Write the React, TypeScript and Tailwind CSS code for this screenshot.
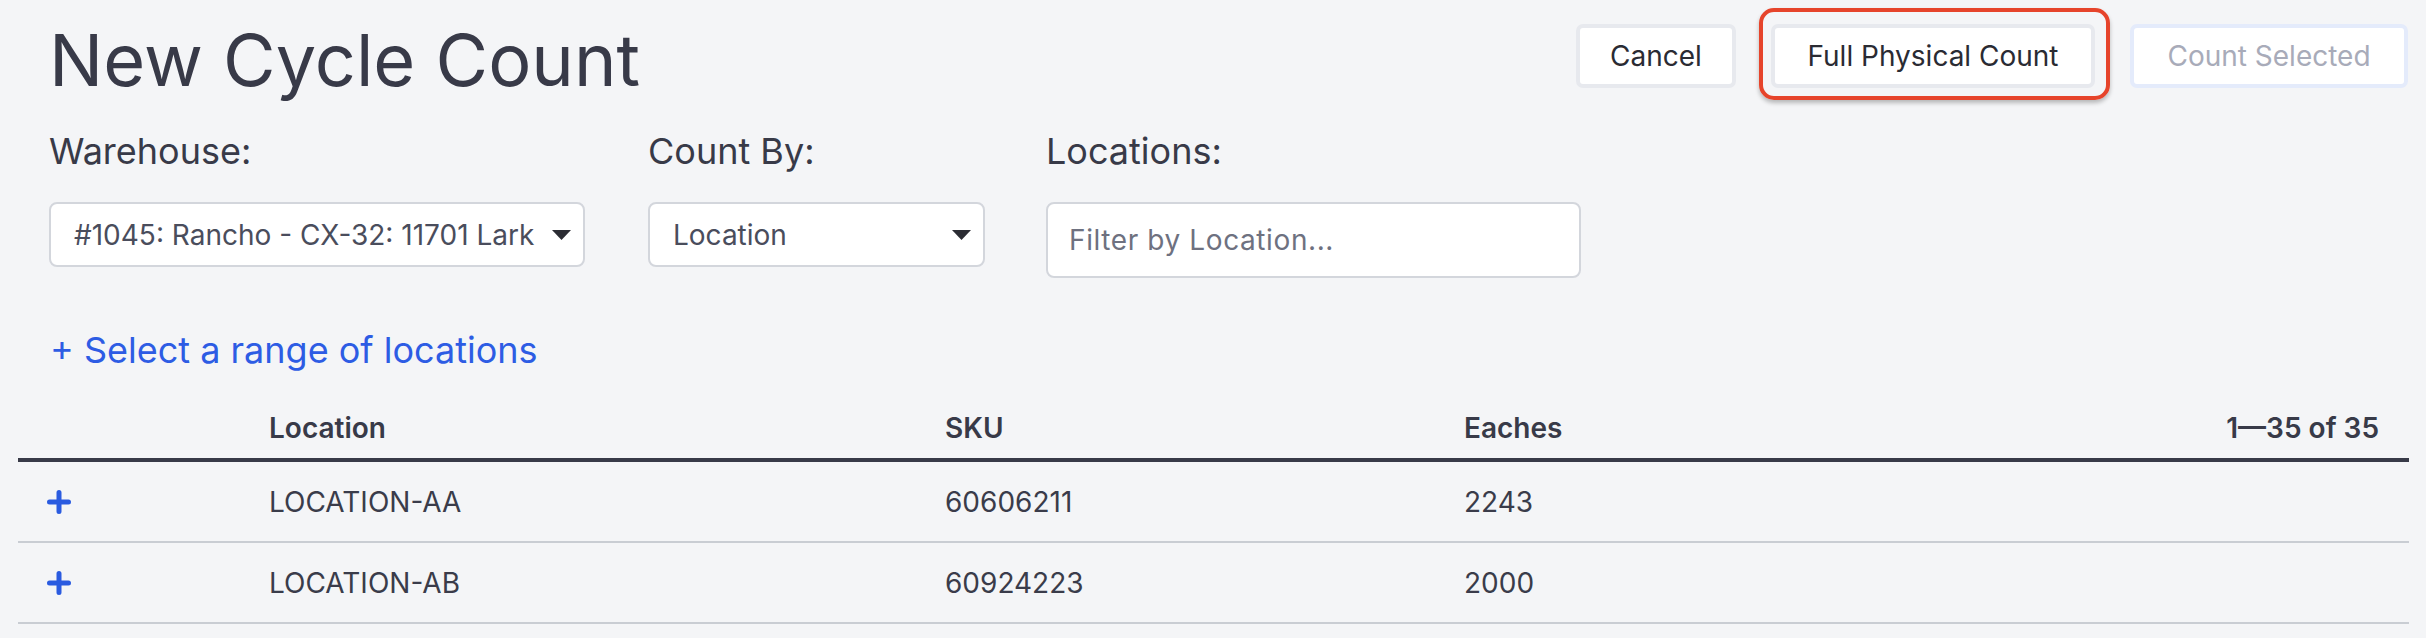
import React from "react";

function Caret() {
  return (
    <svg width="19" height="10" viewBox="0 0 19 10" className="shrink-0">
      <path d="M0 0 L19 0 L9.5 10 Z" fill="#2b2c33" />
    </svg>
  );
}

function Plus() {
  return (
    <svg width="24" height="24" viewBox="0 0 24 24">
      <path d="M12 2.5 V21.5 M2.5 12 H21.5" stroke="#2a5be0" strokeWidth="5" strokeLinecap="round" />
    </svg>
  );
}

const rows = [
  { loc: "LOCATION-AA", sku: "60606211", each: "2243" },
  { loc: "LOCATION-AB", sku: "60924223", each: "2000" },
];

export default function App() {
  return (
    <div
      className="w-full h-[638px] overflow-hidden bg-[#f4f5f7] text-[#383a48] px-[18px]"
      style={{ fontFamily: "Inter, 'Noto Sans', sans-serif" }}
    >
      <div className="pl-[31px] pt-[24px] flex items-start justify-between">
        <h1 className="text-[72px] leading-none font-normal">New Cycle Count</h1>
        <div className="flex items-start gap-[35px]">
          <button className="w-[160px] h-[64px] bg-white border-[4px] border-[#e7e9ee] rounded-[7px] text-[28px] leading-none text-[#2a2b33]">
            Cancel
          </button>
          <div className="relative">
            <button className="w-[324px] h-[64px] bg-white border-[4px] border-[#e7e9ee] rounded-[7px] text-[28px] leading-none text-[#2a2b33]">
              Full Physical Count
            </button>
            <div className="absolute left-[-12px] right-[-15px] top-[-16px] bottom-[-12px] border-[4px] border-[#e6442b] rounded-[15px] shadow-[0_3px_4px_rgba(0,0,0,0.25)] pointer-events-none" />
          </div>
          <button className="w-[278px] h-[64px] bg-white border-[4px] border-[#e4ebfb] rounded-[7px] text-[28px] leading-none text-[#a8abb9]">
            Count Selected
          </button>
        </div>
      </div>

      <div className="pl-[31px] mt-[37px] flex items-start">
        <div className="flex flex-col w-[536px]">
          <label className="text-[36px] leading-none">Warehouse:</label>
          <div className="mt-[33px] h-[65px] bg-white border-2 border-[#d3d6dc] rounded-[8px] flex items-center pl-[23px] pr-[12px] gap-[6px]">
            <span className="flex-1 overflow-hidden whitespace-nowrap text-[28px] text-[#4a4d5c]">#1045: Rancho - CX-32: 11701 Lark</span>
            <Caret />
          </div>
        </div>
        <div className="flex flex-col w-[337px] ml-[63px]">
          <label className="text-[36px] leading-none">Count By:</label>
          <div className="mt-[33px] h-[65px] bg-white border-2 border-[#d3d6dc] rounded-[8px] flex items-center pl-[23px] pr-[12px]">
            <span className="flex-1 text-[28px] text-[#4a4d5c]">Location</span>
            <Caret />
          </div>
        </div>
        <div className="flex flex-col w-[535px] ml-[61px]">
          <label className="text-[36px] leading-none">Locations:</label>
          <div className="mt-[33px] h-[76px] bg-white border-2 border-[#d3d6dc] rounded-[8px] flex items-center pl-[21px]">
            <span className="text-[28px] tracking-[0.6px] text-[#6e7180]">Filter by Location...</span>
          </div>
        </div>
      </div>

      <div className="pl-[32px] mt-[54px] text-[36px] leading-none text-[#2d5ce4]">+ Select a range of locations</div>

      <div className="mt-[46px] mr-[-1px]">
        <div className="grid grid-cols-[251px_676px_519px_1fr] border-b-[4px] border-[#383a48] pb-[16px] text-[28px] leading-none font-semibold">
          <div />
          <div>Location</div>
          <div>SKU</div>
          <div className="flex justify-between pr-[30px]">
            <span>Eaches</span>
            <span>1—35 of 35</span>
          </div>
        </div>
        {rows.map((r) => (
          <div
            key={r.loc}
            className="grid grid-cols-[251px_676px_519px_1fr] items-center h-[81px] border-b-2 border-[#c9cdd3] text-[28px] text-[#3a3c4a]"
          >
            <div className="pl-[29px] flex items-center">
              <Plus />
            </div>
            <div>{r.loc}</div>
            <div>{r.sku}</div>
            <div>{r.each}</div>
          </div>
        ))}
      </div>
    </div>
  );
}
